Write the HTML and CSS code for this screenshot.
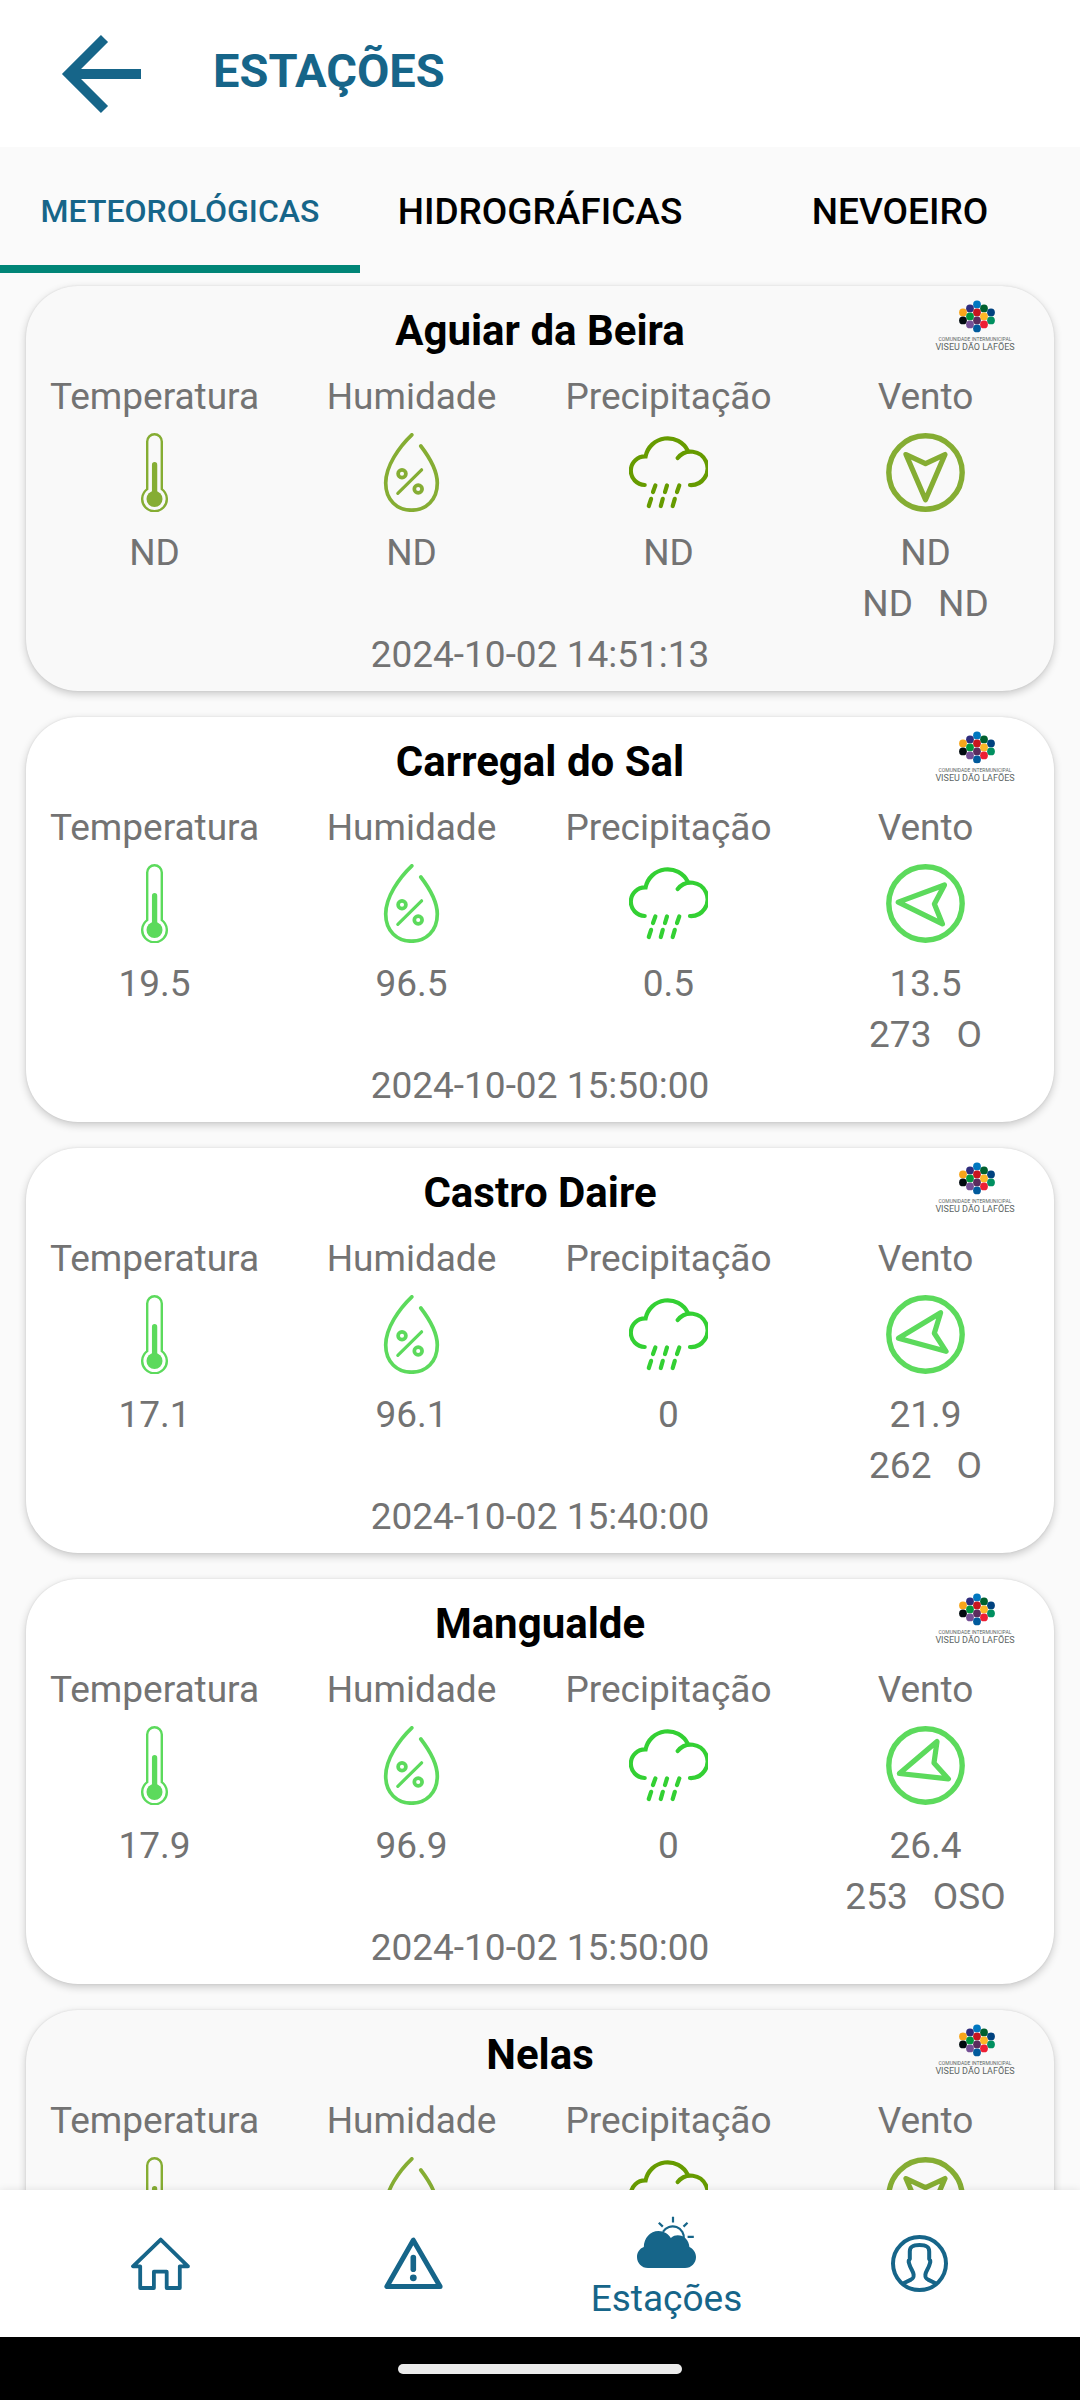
FILE: index.html
```html
<!DOCTYPE html>
<html lang="pt">
<head>
<meta charset="utf-8">
<meta name="viewport" content="width=device-width, initial-scale=1">
<title>Estações</title>
<link rel="stylesheet" href="styles.css">
</head>
<body>
<svg class="sprite" aria-hidden="true">
  <symbol id="thermometer" viewBox="0 0 79 79">
    <path d="M32.2 56.1V8.6a7.3 7.3 0 0 1 14.6 0V56.1A12.3 12.3 0 1 1 32.2 56.1Z" fill="none" stroke="currentColor" stroke-width="2.4"/>
    <path d="M39.6 31.7V62" stroke="currentColor" stroke-width="5.3" stroke-linecap="round"/>
    <circle cx="39.5" cy="66" r="8" fill="currentColor"/>
  </symbol>
  <symbol id="drop" viewBox="0 0 79 79">
    <g fill="none" stroke="currentColor" stroke-width="3.7" stroke-linecap="round">
      <path d="M39.8 1.8C27 14 13.7 33 13.7 50C13.7 67 25 77.2 39.5 77.2C54 77.2 65.3 67 65.3 50C65.3 38 58 25 48.8 13"/>
      <circle cx="30" cy="40.7" r="3.9"/>
      <circle cx="46.2" cy="56" r="3.9"/>
      <path d="M25.8 60.3L49.6 36.8" stroke-width="3.2"/>
    </g>
  </symbol>
  <symbol id="rain" viewBox="0 0 79 79">
    <g fill="none" stroke="currentColor" stroke-width="4.2" stroke-linecap="round">
      <path d="M15.7 52A14.3 14.3 0 1 1 16.6 23.4A22.5 22.5 0 0 1 58.8 17.8"/>
      <path d="M48.7 25A16.7 16.7 0 1 1 61 52"/>
      <path d="M26.4 52.4L24 59M38 52.4L36 59M50.3 52.4L48 59M22.1 65.8L19.8 73M33.8 65.8L31.8 73M45.8 65.8L43.7 73"/>
    </g>
  </symbol>
  <symbol id="ring" viewBox="0 0 79 79">
    <circle cx="39.5" cy="39.5" r="36.7" fill="none" stroke="currentColor" stroke-width="5.4"/>
  </symbol>
  <symbol id="needle" viewBox="0 0 79 79">
    <path d="M20 21.5L39.5 30.6L59 21.5L39.5 66.8Z" fill="none" stroke="currentColor" stroke-width="5.2" stroke-linejoin="round"/>
  </symbol>
  <symbol id="cim-dots" viewBox="0 0 80 52">
    <circle cx="42" cy="4.4" r="3.9" fill="#0077c0"/>
    <circle cx="35" cy="8.4" r="3.9" fill="#2f2d7d"/>
    <circle cx="49" cy="8.4" r="3.9" fill="#00602f"/>
    <circle cx="28" cy="12.4" r="3.9" fill="#f8a51b"/>
    <circle cx="42" cy="12.4" r="3.9" fill="#c8151f"/>
    <circle cx="56" cy="12.4" r="3.9" fill="#00427f"/>
    <circle cx="35" cy="16.4" r="3.9" fill="#00963f"/>
    <circle cx="49" cy="16.4" r="3.9" fill="#fdb827"/>
    <circle cx="28" cy="20.4" r="3.9" fill="#000a0f"/>
    <circle cx="42" cy="20.4" r="3.9" fill="#5b2c5d"/>
    <circle cx="56" cy="20.4" r="3.9" fill="#009060"/>
    <circle cx="35" cy="24.4" r="3.9" fill="#744f95"/>
    <circle cx="49" cy="24.4" r="3.9" fill="#ee1f34"/>
    <circle cx="42" cy="28.4" r="3.9" fill="#005a9c"/>
  </symbol>
</svg>

<div class="app">
  <header class="topbar">
    <button class="back" type="button" aria-label="Voltar">
      <svg viewBox="0 0 80 80" fill="none" stroke="currentColor" stroke-width="10"><path d="M43.5 4.5L8 40L43.5 75.5M9 40H80"/></svg>
    </button>
    <h1 class="topbar-title">ESTAÇÕES</h1>
  </header>

  <nav class="tabs" role="tablist">
    <button class="tab tab-active" type="button" role="tab" aria-selected="true">METEOROLÓGICAS</button>
    <button class="tab" type="button" role="tab" aria-selected="false">HIDROGRÁFICAS</button>
    <button class="tab" type="button" role="tab" aria-selected="false">NEVOEIRO</button>
  </nav>

  <main class="stations">
    <article class="card card-stale">
      <svg class="logo" viewBox="0 0 80 52"><use href="#cim-dots"/><text x="40" y="41" class="logo-small">COMUNIDADE INTERMUNICIPAL</text><text x="40" y="50" class="logo-large">VISEU DÃO LAFÕES</text></svg>
      <h2 class="name">Aguiar da Beira</h2>
      <dl class="readings">
        <div class="reading"><dt>Temperatura</dt><dd><svg class="icon"><use href="#thermometer"/></svg><span>ND</span></dd></div>
        <div class="reading"><dt>Humidade</dt><dd><svg class="icon"><use href="#drop"/></svg><span>ND</span></dd></div>
        <div class="reading"><dt>Precipitação</dt><dd><svg class="icon icon-rain"><use href="#rain"/></svg><span>ND</span></dd></div>
        <div class="reading"><dt>Vento</dt><dd><svg class="icon" viewBox="0 0 79 79"><use href="#ring"/><use href="#needle"/></svg><span>ND</span><span class="wind"><span>ND</span><span>ND</span></span></dd></div>
      </dl>
      <time class="stamp">2024-10-02 14:51:13</time>
    </article>

    <article class="card">
      <svg class="logo" viewBox="0 0 80 52"><use href="#cim-dots"/><text x="40" y="41" class="logo-small">COMUNIDADE INTERMUNICIPAL</text><text x="40" y="50" class="logo-large">VISEU DÃO LAFÕES</text></svg>
      <h2 class="name">Carregal do Sal</h2>
      <dl class="readings">
        <div class="reading"><dt>Temperatura</dt><dd><svg class="icon"><use href="#thermometer"/></svg><span>19.5</span></dd></div>
        <div class="reading"><dt>Humidade</dt><dd><svg class="icon"><use href="#drop"/></svg><span>96.5</span></dd></div>
        <div class="reading"><dt>Precipitação</dt><dd><svg class="icon icon-rain"><use href="#rain"/></svg><span>0.5</span></dd></div>
        <div class="reading"><dt>Vento</dt><dd><svg class="icon" viewBox="0 0 79 79"><use href="#ring"/><g transform="rotate(93 39.5 39.5)"><use href="#needle"/></g></svg><span>13.5</span><span class="wind"><span>273</span><span>O</span></span></dd></div>
      </dl>
      <time class="stamp">2024-10-02 15:50:00</time>
    </article>

    <article class="card">
      <svg class="logo" viewBox="0 0 80 52"><use href="#cim-dots"/><text x="40" y="41" class="logo-small">COMUNIDADE INTERMUNICIPAL</text><text x="40" y="50" class="logo-large">VISEU DÃO LAFÕES</text></svg>
      <h2 class="name">Castro Daire</h2>
      <dl class="readings">
        <div class="reading"><dt>Temperatura</dt><dd><svg class="icon"><use href="#thermometer"/></svg><span>17.1</span></dd></div>
        <div class="reading"><dt>Humidade</dt><dd><svg class="icon"><use href="#drop"/></svg><span>96.1</span></dd></div>
        <div class="reading"><dt>Precipitação</dt><dd><svg class="icon icon-rain"><use href="#rain"/></svg><span>0</span></dd></div>
        <div class="reading"><dt>Vento</dt><dd><svg class="icon" viewBox="0 0 79 79"><use href="#ring"/><g transform="rotate(82 39.5 39.5)"><use href="#needle"/></g></svg><span>21.9</span><span class="wind"><span>262</span><span>O</span></span></dd></div>
      </dl>
      <time class="stamp">2024-10-02 15:40:00</time>
    </article>

    <article class="card">
      <svg class="logo" viewBox="0 0 80 52"><use href="#cim-dots"/><text x="40" y="41" class="logo-small">COMUNIDADE INTERMUNICIPAL</text><text x="40" y="50" class="logo-large">VISEU DÃO LAFÕES</text></svg>
      <h2 class="name">Mangualde</h2>
      <dl class="readings">
        <div class="reading"><dt>Temperatura</dt><dd><svg class="icon"><use href="#thermometer"/></svg><span>17.9</span></dd></div>
        <div class="reading"><dt>Humidade</dt><dd><svg class="icon"><use href="#drop"/></svg><span>96.9</span></dd></div>
        <div class="reading"><dt>Precipitação</dt><dd><svg class="icon icon-rain"><use href="#rain"/></svg><span>0</span></dd></div>
        <div class="reading"><dt>Vento</dt><dd><svg class="icon" viewBox="0 0 79 79"><use href="#ring"/><g transform="rotate(73 39.5 39.5)"><use href="#needle"/></g></svg><span>26.4</span><span class="wind"><span>253</span><span>OSO</span></span></dd></div>
      </dl>
      <time class="stamp">2024-10-02 15:50:00</time>
    </article>

    <article class="card card-stale">
      <svg class="logo" viewBox="0 0 80 52"><use href="#cim-dots"/><text x="40" y="41" class="logo-small">COMUNIDADE INTERMUNICIPAL</text><text x="40" y="50" class="logo-large">VISEU DÃO LAFÕES</text></svg>
      <h2 class="name">Nelas</h2>
      <dl class="readings">
        <div class="reading"><dt>Temperatura</dt><dd><svg class="icon"><use href="#thermometer"/></svg></dd></div>
        <div class="reading"><dt>Humidade</dt><dd><svg class="icon"><use href="#drop"/></svg></dd></div>
        <div class="reading"><dt>Precipitação</dt><dd><svg class="icon icon-rain"><use href="#rain"/></svg></dd></div>
        <div class="reading"><dt>Vento</dt><dd><svg class="icon" viewBox="0 0 79 79"><use href="#ring"/><use href="#needle"/></svg></dd></div>
      </dl>
    </article>
  </main>

  <nav class="bottom-nav" aria-label="Principal">
    <a class="nav-item" href="#inicio" aria-label="Início">
      <svg class="nav-icon" viewBox="0 0 59 59" fill="none" stroke="currentColor" stroke-width="3.8" stroke-linejoin="round"><path d="M29.7 5.6L2 32.3H9.2V54H22.9V37.7H35.7V54H48.8V32.3H57Z"/></svg>
    </a>
    <a class="nav-item" href="#avisos" aria-label="Avisos">
      <svg class="nav-icon" viewBox="0 0 59 59" fill="none" stroke="currentColor" stroke-width="5" stroke-linejoin="round"><path d="M29.3 6.2L2.9 52.5H56.1Z"/><path d="M29.3 23.5V35.2" stroke-width="5.6" stroke-linecap="round"/><circle cx="29.3" cy="43.8" r="3.4" fill="currentColor" stroke="none"/></svg>
    </a>
    <a class="nav-item nav-item-active" href="#estacoes" aria-current="page">
      <svg class="nav-icon" viewBox="0 0 59 59"><path fill="currentColor" d="M11 54C4.5 54 0 49 0 43C0 38.5 2.5 34.5 6.8 33C7 24 13 17 21.5 17C27 17 31.5 20 33.8 24C36 22 38.5 21.3 40.7 21.3C47 21.3 52 26 52.4 33C56.5 35 59 39 59 43C59 49 54.5 54 48 54Z"/><path fill="none" stroke="currentColor" stroke-width="2.2" d="M26 17.8A11.3 11.3 0 0 1 46.8 25.5M36 2.7V8.6M21.8 8.7L25.8 12.6M50.5 8.7L46.5 12.6M50.6 22.8H56.8"/></svg>
      <span class="nav-label">Estações</span>
    </a>
    <a class="nav-item" href="#perfil" aria-label="Perfil">
      <svg class="nav-icon" viewBox="0 0 59 59" fill="none" stroke="currentColor" stroke-width="4"><circle cx="29.5" cy="29.6" r="26.5"/><path stroke-linejoin="round" d="M12.5 49.7L21 45.6C23.5 44.3 23.8 43.5 23.6 40.5C23.3 37.5 20.2 34 19.3 30C18.4 28 18.2 26.5 19.8 25V17.5C19.8 12.5 23 10.9 29.5 10.9C36 10.9 39.2 12.5 39.2 17.5V25C40.8 26.5 40.6 28 39.7 30C38.8 34 35.7 37.5 35.4 40.5C35.2 43.5 35.5 44.3 38 45.6L46.5 49.7"/></svg>
    </a>
  </nav>
  <div class="system-bar"><span class="home-pill"></span></div>
</div>
</body>
</html>
```
FILE: styles.css
```css
* {
  box-sizing: border-box;
}

body {
  margin: 0;
  background: #fafafa;
  color: #737373;
  font-family: Roboto, "Noto Sans", sans-serif;
  font-size: 37px;
  line-height: 51px;
}

h1, h2, dl, dt, dd {
  margin: 0;
}

button {
  padding: 0;
  border: 0;
  background: none;
  font: inherit;
}

svg {
  display: block;
}

.sprite {
  position: absolute;
  width: 0;
  height: 0;
}

.app {
  display: flex;
  flex-direction: column;
  height: 100vh;
}

/* Top bar */
.topbar {
  display: flex;
  align-items: center;
  gap: 72px;
  height: 147px;
  padding-left: 61px;
  flex: none;
  background: #fff;
  color: #166589;
}

.back {
  width: 80px;
  height: 80px;
  color: inherit;
}

.topbar-title {
  padding-bottom: 6px;
  font-size: 47px;
  font-weight: 700;
}

/* Tabs */
.tabs {
  display: grid;
  grid-template-columns: repeat(3, 1fr);
  height: 126px;
  flex: none;
}

.tab {
  padding-top: 2px;
  color: #000;
  font-weight: 500;
}

.tab-active {
  box-shadow: inset 0 -8px #008577;
  color: #166589;
  font-size: 32px;
}

/* Station list */
.stations {
  display: flex;
  flex-direction: column;
  flex: 1;
  gap: 26px;
  min-height: 0;
  padding: 13px 26px;
  overflow-y: auto;
  scrollbar-width: none;
}

.card {
  --icon: #5cda5c;
  --icon-rain: #33d033;
  position: relative;
  flex: none;
  padding: 19px 0 11px;
  border-radius: 52px;
  background: #fff;
  box-shadow: 0 3px 8px rgba(0, 0, 0, 0.2), 0 0 2px rgba(0, 0, 0, 0.1);
  text-align: center;
}

.card-stale {
  --icon: #85ad33;
  --icon-rain: #669b00;
  background: #f9f9f9;
}

.logo {
  position: absolute;
  top: 14px;
  right: 39px;
  width: 80px;
  height: 52px;
}

.logo-small,
.logo-large {
  fill: #5d6664;
  text-anchor: middle;
}

.logo-small {
  font-size: 5px;
}

.logo-large {
  font-size: 9px;
}

.name {
  margin-bottom: 15px;
  color: #000;
  font-size: 42px;
  font-weight: 700;
}

.readings {
  display: grid;
  grid-template-columns: repeat(4, 1fr);
}

.reading dd {
  display: flex;
  flex-direction: column;
  align-items: center;
}

.icon {
  width: 79px;
  height: 79px;
  margin: 11px 0 15px;
  color: var(--icon);
}

.icon-rain {
  color: var(--icon-rain);
}

.wind {
  display: flex;
  gap: 25px;
}

.stamp {
  display: block;
}

/* Bottom navigation */
.bottom-nav {
  z-index: 1;
  display: grid;
  grid-template-columns: repeat(4, 1fr);
  height: 147px;
  padding: 0 34px;
  flex: none;
  background: #fff;
  box-shadow: 0 0 8px rgba(0, 0, 0, 0.1);
}

.nav-item {
  display: flex;
  flex-direction: column;
  align-items: center;
  justify-content: center;
  color: #166589;
  text-decoration: none;
}

.nav-item-active {
  padding-top: 10px;
}

.nav-icon {
  width: 59px;
  height: 59px;
}

.system-bar {
  z-index: 1;
  display: flex;
  align-items: center;
  justify-content: center;
  height: 63px;
  flex: none;
  background: #000;
}

.home-pill {
  width: 284px;
  height: 10px;
  border-radius: 5px;
  background: #ebebeb;
}
```
